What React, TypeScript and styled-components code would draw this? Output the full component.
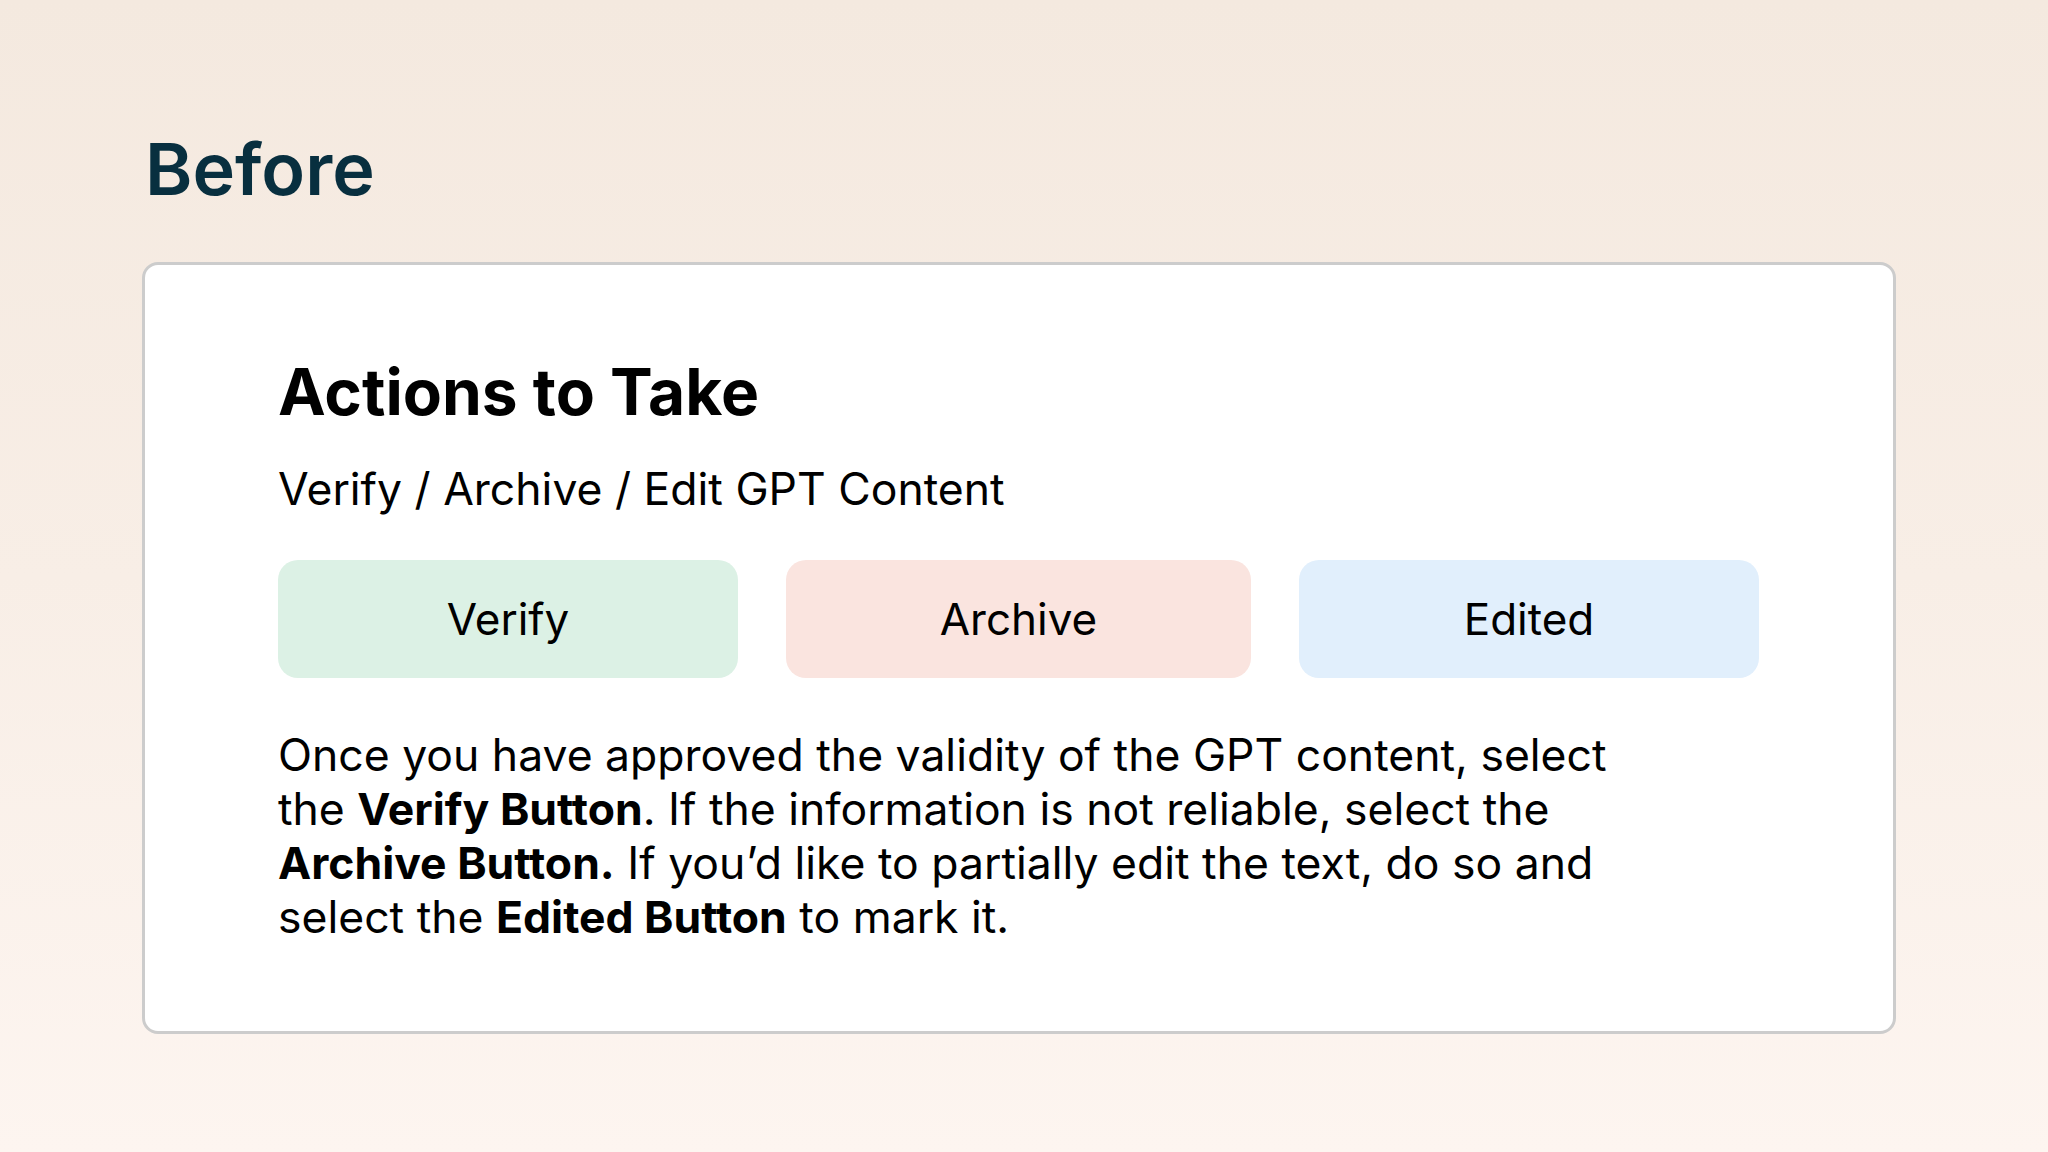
import React from "react";
import styled, { createGlobalStyle } from "styled-components";

type Tone = "verify" | "archive" | "edited";

const toneColors: Record<Tone, string> = {
  verify: "#dcf1e5",
  archive: "#fae4df",
  edited: "#e1effc",
};

const actions: { label: string; tone: Tone; width: number }[] = [
  { label: "Verify", tone: "verify", width: 460 },
  { label: "Archive", tone: "archive", width: 465 },
  { label: "Edited", tone: "edited", width: 460 },
];

const App = () => {
  return (
    <>
      <GlobalStyle />
      <Page>
        <Heading>Before</Heading>
        <Card>
          <Title>Actions to Take</Title>
          <Subtitle>Verify / Archive / Edit GPT Content</Subtitle>
          <ButtonRow>
            {actions.map((action) => (
              <ActionButton key={action.label} $tone={action.tone} $width={action.width}>
                {action.label}
              </ActionButton>
            ))}
          </ButtonRow>
          <Description>
            Once you have approved the validity of the GPT content, select the{" "}
            <b>Verify Button</b>. If the information is not reliable, select the{" "}
            <b>Archive Button.</b> If you’d like to partially edit the text, do so and
            select the <b>Edited Button</b> to mark it.
          </Description>
        </Card>
      </Page>
    </>
  );
};

export default App;

const GlobalStyle = createGlobalStyle`
  * {
    box-sizing: border-box;
  }

  body {
    margin: 0;
    background: linear-gradient(180deg, #f4e9df 0%, #f8eee6 50%, #fdf5f0 100%);
    font-family: "Inter", "Noto Sans", sans-serif;
  }
`;

const Page = styled.div`
  min-height: 1152px;
  padding: 126px 0 0 142px;
`;

const Heading = styled.h1`
  margin: 0 0 50px 3px;

  color: #082f3f;
  font-size: 72px;
  font-weight: 600;
  line-height: 1.2;
`;

const Card = styled.section`
  width: 1754px;
  padding: 89px 133px 87px;

  background-color: #ffffff;
  border: 3px solid #cccccc;
  border-radius: 16px;
`;

const Title = styled.h2`
  margin: 0;

  color: #000000;
  font-size: 64px;
  font-weight: 700;
  line-height: 1.2;
`;

const Subtitle = styled.p`
  margin: 32px 0 0;

  color: #000000;
  font-size: 44.5px;
  line-height: 1.2;
`;

const ButtonRow = styled.div`
  display: flex;
  flex-direction: row;
  gap: 48px;

  margin-top: 43px;
`;

const ActionButton = styled.button<{ $tone: Tone; $width: number }>`
  display: flex;
  align-items: center;
  justify-content: center;

  width: ${({ $width }) => $width}px;
  height: 118px;
  padding: 0;

  background-color: ${({ $tone }) => toneColors[$tone]};
  border: none;
  border-radius: 20px;

  color: #000000;
  font-family: inherit;
  font-size: 44px;
  font-weight: 400;
`;

const Description = styled.p`
  max-width: 1370px;
  margin: 50px 0 0;

  color: #000000;
  font-size: 44.5px;
  line-height: 54px;

  b {
    font-weight: 700;
  }
`;
